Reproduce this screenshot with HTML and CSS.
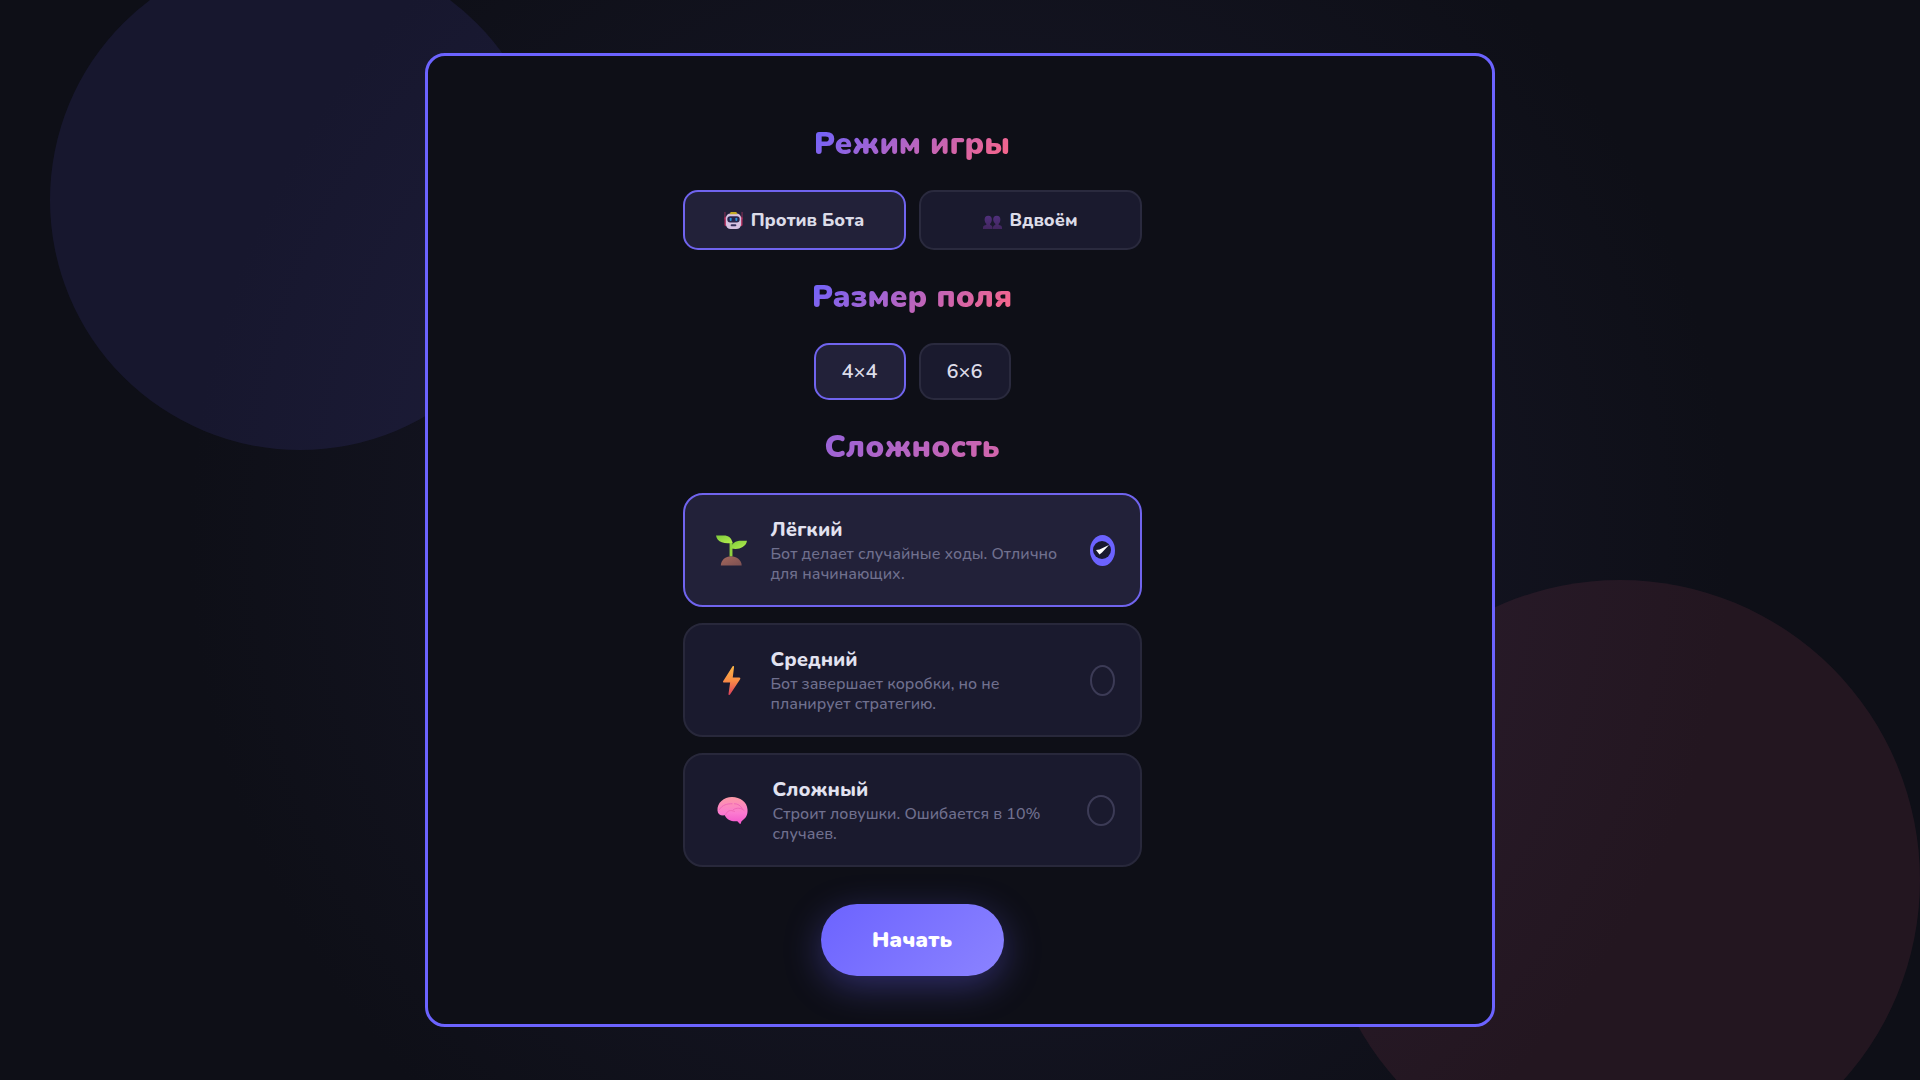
FILE: index.html
```html
<!DOCTYPE html>
<html lang="ru">
<head>
<meta charset="utf-8">
<title>Режим игры</title>
<meta name="viewport" content="width=device-width, initial-scale=1">
<link rel="stylesheet" href="styles.css">
</head>
<body>
<main class="stage">
  <span class="blob blob-violet"></span>
  <span class="blob blob-pink"></span>
  <form class="panel">
    <div class="setup">
      <h2 class="heading">Режим игры</h2>
      <div class="modes">
        <button type="button" class="option mode is-active" aria-pressed="true">
          <svg class="mode-icon" viewBox="0 0 20 20" aria-hidden="true">
            <path d="M1 1v8M19 1v8" stroke="#8f3058" stroke-width="1"/>
            <rect x="0.500" y="6" width="3" height="10" rx="1.500" fill="#b3315f"/>
            <rect x="16.500" y="6" width="3" height="10" rx="1.500" fill="#b3315f"/>
            <rect x="2" y="2.500" width="16" height="16.500" rx="5" fill="#d6c2e2"/>
            <path d="M7 1h6l1 2.500H6z" fill="#c2ac24"/>
            <rect x="3.500" y="5.500" width="13" height="6.500" rx="3" fill="#28264c"/>
            <rect x="6" y="7" width="2" height="3.500" rx="1" fill="#2893d8"/>
            <rect x="12" y="7" width="2" height="3.500" rx="1" fill="#2893d8"/>
            <rect x="7" y="14" width="6" height="2" rx="1" fill="#35305c"/>
          </svg>
          Против Бота
        </button>
        <button type="button" class="option mode" aria-pressed="false">
          <svg class="mode-icon" viewBox="0 0 20 20" aria-hidden="true">
            <defs>
              <linearGradient id="people" x1="0" y1="0" x2="0" y2="1">
                <stop offset="0" stop-color="#50307c"/>
                <stop offset="1" stop-color="#42265f"/>
              </linearGradient>
            </defs>
            <g fill="url(#people)">
              <path d="M5.500 5a3.800 4 0 0 1 3.800 4c0 2-.8 3.500-1.800 4.300v1.500c1.500.4 2.500 1.300 2.500 2.700v1.500H0v-1.500c0-1.600 1.500-2.500 3.500-2.700v-1.500C2.400 12.500 1.700 11 1.700 9a3.800 4 0 0 1 3.800-4z"/>
              <path d="M14.500 5a3.800 4 0 0 1 3.800 4c0 2-.7 3.500-1.800 4.300v1.500c2 .2 3.500 1.100 3.500 2.700v1.500h-9.500v-1.500c0-1.400 1-2.300 2.500-2.700v-1.500c-1-.8-2.300-2.300-2.300-4.300a3.800 4 0 0 1 3.800-4z"/>
            </g>
          </svg>
          Вдвоём
        </button>
      </div>

      <h2 class="heading">Размер поля</h2>
      <div class="sizes">
        <button type="button" class="option size is-active" aria-pressed="true">4×4</button>
        <button type="button" class="option size" aria-pressed="false">6×6</button>
      </div>

      <h2 class="heading heading-wide">Сложность</h2>
      <div class="levels">
        <label class="level is-active">
          <span class="level-icon">
            <svg viewBox="0 0 32 32" aria-hidden="true">
              <defs>
                <linearGradient id="leaf" x1="0" y1="0" x2="1" y2="1">
                  <stop offset="0" stop-color="#7ecb3c"/>
                  <stop offset="1" stop-color="#b6ee4e"/>
                </linearGradient>
                <linearGradient id="soil" x1="0" y1="0" x2="1" y2="1">
                  <stop offset="0" stop-color="#a5685c"/>
                  <stop offset="1" stop-color="#7d5052"/>
                </linearGradient>
              </defs>
              <path d="M5 31.500c0-5.500 5-9.500 10.500-9.500S26.500 26 26.500 31.500z" fill="url(#soil)"/>
              <path d="M14 7h3v15h-3z" fill="#8fd23f"/>
              <path d="M0 .5h8c5 0 8 2.500 9 7.500-4 1-8 .8-11-.5C2.500 6.200.6 4 0 .5z" fill="url(#leaf)"/>
              <path d="M32 6h-6c-6 0-10 2.500-10.500 8 5 .8 9 .5 12-1.500 2.500-1.600 4-3.500 4.500-6.500z" fill="url(#leaf)"/>
            </svg>
          </span>
          <span class="level-text">
            <span class="level-title">Лёгкий</span>
            <span class="level-note">Бот делает случайные ходы. Отлично<br>для начинающих.</span>
          </span>
          <span class="level-pick">
            <input type="radio" name="level" class="radio" checked>
            <svg class="tick" viewBox="0 0 18 18" aria-hidden="true">
              <circle cx="9" cy="9" r="9" fill="#191930"/>
              <path d="M3 9l3.500-.5L16 4 9 11.500 6.500 13.500z" fill="#fff"/>
            </svg>
          </span>
        </label>

        <label class="level">
          <span class="level-icon">
            <svg viewBox="0 0 32 32" aria-hidden="true">
              <defs>
                <linearGradient id="bolt" x1="0" y1="0" x2="0" y2="1">
                  <stop offset="0" stop-color="#fbb748"/>
                  <stop offset=".5" stop-color="#f98d45"/>
                  <stop offset="1" stop-color="#dc3f5e"/>
                </linearGradient>
              </defs>
              <path d="M17 1.500c.7-.8 1.800-.3 1.600.7L17.300 13H24c1 0 1.400.8.9 1.600L14.500 30.500c-.6.9-1.800.5-1.600-.6L14.600 18H8.300c-1 0-1.400-.8-.8-1.600z" fill="url(#bolt)"/>
            </svg>
          </span>
          <span class="level-text">
            <span class="level-title">Средний</span>
            <span class="level-note">Бот завершает коробки, но не<br>планирует стратегию.</span>
          </span>
          <span class="level-pick"><input type="radio" name="level" class="radio"></span>
        </label>

        <label class="level level-roomy">
          <span class="level-icon">
            <svg viewBox="0 0 32 32" aria-hidden="true">
              <defs>
                <linearGradient id="brain" x1="0" y1="0" x2="0" y2="1">
                  <stop offset="0" stop-color="#fd9aa6"/>
                  <stop offset=".6" stop-color="#fb7ad0"/>
                  <stop offset="1" stop-color="#f457cc"/>
                </linearGradient>
              </defs>
              <path d="M.5 16C0 8 7 2 15.500 2 24 2 31 7 31.500 15c.4 5-1.500 9-5 11l-1.500 1.500c-.2 1.800-1 3-1.800 2L21 27c-5 .5-10 0-13-6C3.500 21.500.8 20 .5 16z" fill="url(#brain)"/>
              <path d="M2.500 15c3-5 8-6 13-6M18 9c4 0 6 2 8 5M9 20c1.500-4 5-5 9-3M17 15c3-2 8-2 11 1" fill="none" stroke="#ee66b6" stroke-width="1" stroke-linecap="round"/>
            </svg>
          </span>
          <span class="level-text">
            <span class="level-title">Сложный</span>
            <span class="level-note">Строит ловушки. Ошибается в 10%<br>случаев.</span>
          </span>
          <span class="level-pick"><input type="radio" name="level" class="radio"></span>
        </label>
      </div>

      <button type="submit" class="start">Начать</button>
    </div>
  </form>
</main>
</body>
</html>
```

FILE: styles.css
```css
* {
  box-sizing: border-box;
}

body {
  margin: 0;
  background: #0f0f18;
  color: #e2e2f0;
  font-family: Nunito, "Open Sans", sans-serif;
}

.stage {
  position: relative;
  display: flex;
  align-items: center;
  justify-content: center;
  min-height: 100vh;
  overflow: hidden;
  background: radial-gradient(circle at center, #1a1a2e 0%, #0e0f17 70%);
}

.blob {
  position: absolute;
  border-radius: 50%;
}

.blob-violet {
  top: -50px;
  left: 50px;
  width: 500px;
  height: 500px;
  background: rgba(108, 99, 255, 0.1);
}

.blob-pink {
  right: 0;
  bottom: -100px;
  width: 600px;
  height: 600px;
  background: rgba(255, 101, 132, 0.09);
}

.panel {
  position: relative;
  display: flex;
  justify-content: center;
  width: 100%;
  max-width: 1070px;
  padding: 66px 96px 48px 0;
  border: 3px solid #6c63ff;
  border-radius: 20px;
  background: #0e0f17;
}

.setup {
  display: flex;
  flex-direction: column;
  align-items: center;
  width: 100%;
  max-width: 459px;
}

.heading {
  margin: 0 0 24px;
  background: linear-gradient(135deg, #6c63ff, #ff6584);
  background-clip: text;
  -webkit-background-clip: text;
  color: transparent;
  font-size: 31px;
  font-weight: 900;
  line-height: 44px;
  text-align: center;
}

.heading-wide {
  width: 100%;
}

.modes,
.sizes {
  display: flex;
  justify-content: center;
  gap: 13px;
  width: 100%;
  margin-bottom: 25px;
}

.option {
  border: 2px solid #2a2a3e;
  border-radius: 15px;
  background: #1a1a2e;
  color: #dcdce8;
  font-family: inherit;
  cursor: pointer;
}

.option.is-active,
.level.is-active {
  border-color: #7064ee;
  background: #222139;
}

.mode {
  display: flex;
  flex: 1;
  align-items: center;
  justify-content: center;
  gap: 8px;
  height: 60px;
  padding: 0;
  font-size: 18px;
  font-weight: 800;
}

.mode-icon {
  width: 19px;
  height: 19px;
}

.size {
  width: 92px;
  height: 57px;
  padding: 0;
  font-size: 20px;
  font-weight: 600;
}

.levels {
  display: flex;
  flex-direction: column;
  gap: 16px;
  width: 100%;
}

.level {
  display: flex;
  align-items: center;
  gap: 20px;
  padding: 21px 25px 21px 28px;
  border: 2px solid #28283b;
  border-radius: 20px;
  background: #1a1a2e;
  cursor: pointer;
}

.level-icon {
  display: flex;
  flex: none;
  justify-content: center;
  width: 38px;
}

.level-roomy .level-icon {
  width: 40px;
}

.level-icon svg {
  width: 31px;
  height: 31px;
}

.level-text {
  display: flex;
  flex: 1;
  flex-direction: column;
  white-space: nowrap;
}

.level-title {
  font-size: 20px;
  font-weight: 800;
  line-height: 28px;
}

.level-note {
  color: #70708e;
  font-size: 16px;
  font-weight: 500;
  line-height: 20px;
}

.level-pick {
  display: grid;
  flex: none;
  place-items: center;
}

.radio {
  grid-area: 1 / 1;
  width: 25px;
  height: 31px;
  margin: 0;
  border: 2px solid #3c3b56;
  border-radius: 50%;
  appearance: none;
}

.level-roomy .radio {
  width: 28px;
}

.radio:checked {
  border-color: #6c63ff;
  background: #6c63ff;
}

.tick {
  z-index: 1;
  grid-area: 1 / 1;
  width: 18px;
  height: 18px;
}

.start {
  width: 183px;
  height: 72px;
  margin-top: 37px;
  border: 0;
  border-radius: 36px;
  background: linear-gradient(135deg, #6c63ff, #8b83ff);
  box-shadow: 0 10px 36px rgba(108, 99, 255, 0.35);
  color: #fff;
  font-family: inherit;
  font-size: 22px;
  font-weight: 900;
  cursor: pointer;
}
```
